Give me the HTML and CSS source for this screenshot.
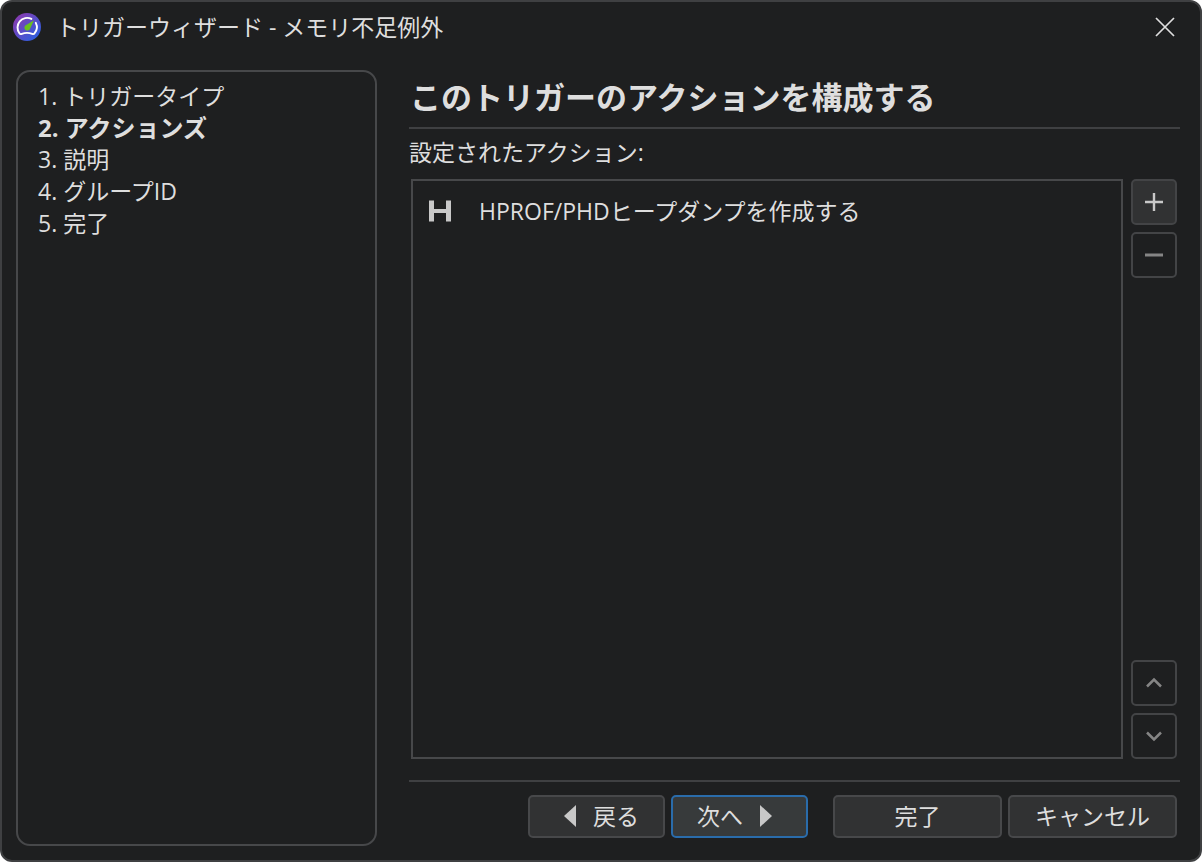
FILE: index.html
```
<!DOCTYPE html>
<html lang="ja">
<head>
    <meta charset="UTF-8">
    <meta name="viewport" content="width=device-width, initial-scale=1.0">
    <title>トリガーウィザード - メモリ不足例外</title>
    <link rel="stylesheet" href="styles.css">
</head>
<body>
    <div class="window">
        <header class="titlebar">
            <svg class="logo" viewBox="0 0 28 28" aria-hidden="true">
                <defs>
                    <linearGradient id="logoFill" x1="0" y1="0" x2="1" y2="1">
                        <stop offset="0.1" stop-color="#8a3ab0"/>
                        <stop offset="0.9" stop-color="#2b5fe0"/>
                    </linearGradient>
                </defs>
                <circle cx="14" cy="14" r="14" fill="url(#logoFill)"/>
                <path d="M18.4 5.9A9.6 9.6 0 0 0 6.4 20.2Q7.2 21.6 8.8 20.9Q14 18.9 19.2 20.9Q20.8 21.6 21.6 20.2A9.6 9.6 0 0 0 22.8 9.8" fill="none" stroke="#fff" stroke-width="1.9" stroke-linecap="round"/>
                <path d="M21 7.2L17.3 15.2A3 3 0 1 1 12.3 12.4Z" fill="#6abf1f"/>
            </svg>
            <h1 class="title">トリガーウィザード - メモリ不足例外</h1>
            <button type="button" class="close" aria-label="閉じる">
                <svg width="20" height="20" viewBox="0 0 20 20"><path d="M1 1l18 18M19 1L1 19" fill="none" stroke="#dedede" stroke-width="1.7"/></svg>
            </button>
        </header>
        <div class="content">
            <nav class="steps">
                <ol class="step-list">
                    <li>1. トリガータイプ</li>
                    <li class="current" aria-current="step">2. アクションズ</li>
                    <li>3. 説明</li>
                    <li>4. グループID</li>
                    <li>5. 完了</li>
                </ol>
            </nav>
            <main class="page">
                <h2 class="heading">このトリガーのアクションを構成する</h2>
                <p class="label" id="actionsLabel">設定されたアクション:</p>
                <div class="editor">
                    <ul class="actions" aria-labelledby="actionsLabel">
                        <li class="action">
                            <svg width="22" height="22" viewBox="0 0 22 22" aria-hidden="true"><path d="M0 0.5h5v8.5h12V0.5h5v21h-5V13H5v8.500H0z" fill="#c8c8c8"/></svg>
                            <span>HPROF/PHDヒープダンプを作成する</span>
                        </li>
                    </ul>
                    <div class="tools">
                        <button type="button" class="tool add" aria-label="追加">
                            <svg width="20" height="20" viewBox="0 0 20 20"><path d="M10 1v18M1 10h18" fill="none" stroke="#c8c8c8" stroke-width="2.4"/></svg>
                        </button>
                        <button type="button" class="tool" aria-label="削除">
                            <svg width="20" height="20" viewBox="0 0 20 20"><path d="M1 10h18" fill="none" stroke="#858585" stroke-width="3"/></svg>
                        </button>
                        <button type="button" class="tool up" aria-label="上へ">
                            <svg width="20" height="20" viewBox="0 0 20 20"><path d="M3 13.500l7-7 7 7" fill="none" stroke="#858585" stroke-width="2.5"/></svg>
                        </button>
                        <button type="button" class="tool" aria-label="下へ">
                            <svg width="20" height="20" viewBox="0 0 20 20"><path d="M3 6.500l7 7 7-7" fill="none" stroke="#858585" stroke-width="2.5"/></svg>
                        </button>
                    </div>
                </div>
                <footer class="buttons">
                    <button type="button" class="button back">
                        <svg width="12" height="22" viewBox="0 0 12 22" aria-hidden="true"><path d="M12 0v22L0 11z" fill="#c8c8c8"/></svg>
                        戻る
                    </button>
                    <button type="button" class="button next">
                        次へ
                        <svg width="12" height="22" viewBox="0 0 12 22" aria-hidden="true"><path d="M0 0v22l12-11z" fill="#c8c8c8"/></svg>
                    </button>
                    <button type="button" class="button wide finish">完了</button>
                    <button type="button" class="button wide">キャンセル</button>
                </footer>
            </main>
        </div>
    </div>
</body>
</html>
```
FILE: styles.css
```
* {
    box-sizing: border-box;
}

body {
    margin: 0;
    background: #fff;
    color: #dedede;
    font-family: "Open Sans", "Noto Sans CJK JP", sans-serif;
    font-size: 23px;
    line-height: 32px;
}

button {
    font: inherit;
    color: inherit;
    cursor: pointer;
}

svg {
    display: block;
    flex: none;
}

h1, h2, p, ol, ul {
    margin: 0;
    padding: 0;
    list-style: none;
}

.window {
    display: flex;
    flex-direction: column;
    min-height: 100vh;
    background: #1e1f20;
    border: 2px solid #3f4042;
    border-radius: 12px;
}

.titlebar {
    display: flex;
    align-items: center;
    height: 50px;
    padding: 0 21px 0 11px;
}

.logo {
    width: 28px;
    height: 28px;
}

.title {
    flex: 1;
    margin-left: 15px;
    font-size: 23px;
    font-weight: 400;
}

.close {
    padding: 4px;
    background: none;
    border: none;
}

.content {
    flex: 1;
    display: flex;
    gap: 32px;
    padding: 18px 20px 14px 14px;
}

.steps {
    width: 361px;
    flex: none;
    padding: 8px 20px;
    border: 2px solid #47484a;
    border-radius: 14px;
}

.current {
    font-size: 24px;
    font-weight: 700;
    line-height: 31px;
}

.page {
    flex: 1;
    display: flex;
    flex-direction: column;
    min-width: 0;
}

.heading {
    padding: 7px 1px 10px;
    border-bottom: 2px solid #3f4042;
    font-size: 31px;
    font-weight: 700;
    line-height: 40px;
}

.label {
    padding: 7px 0 11px;
}

.editor {
    flex: 1;
    display: flex;
    gap: 8px;
    padding: 0 3px 21px 2px;
}

.actions {
    flex: 1;
    border: 2px solid #47484a;
}

.action {
    display: flex;
    align-items: center;
    gap: 28px;
    padding: 14px 16px;
}

.tools {
    display: flex;
    flex-direction: column;
    gap: 7px;
}

.tool {
    display: flex;
    align-items: center;
    justify-content: center;
    width: 46px;
    height: 46px;
    padding: 0;
    background: none;
    border: 2px solid #434446;
    border-radius: 5px;
}

.add {
    background: #313233;
}

.up {
    margin-top: auto;
}

.buttons {
    display: flex;
    justify-content: flex-end;
    gap: 6px;
    padding: 13px 3px 8px 0;
    border-top: 2px solid #3f4042;
}

.button {
    display: flex;
    align-items: center;
    justify-content: center;
    gap: 17px;
    width: 137px;
    height: 43px;
    padding: 0 0 2px;
    background: #313233;
    border: 2px solid #47484a;
    border-radius: 5px;
}

.back {
    padding-left: 10px;
}

.next {
    padding-right: 10px;
    background: #373a3b;
    border-color: #2a6cab;
}

.wide {
    width: 169px;
}

.finish {
    margin-left: 19px;
}
```
